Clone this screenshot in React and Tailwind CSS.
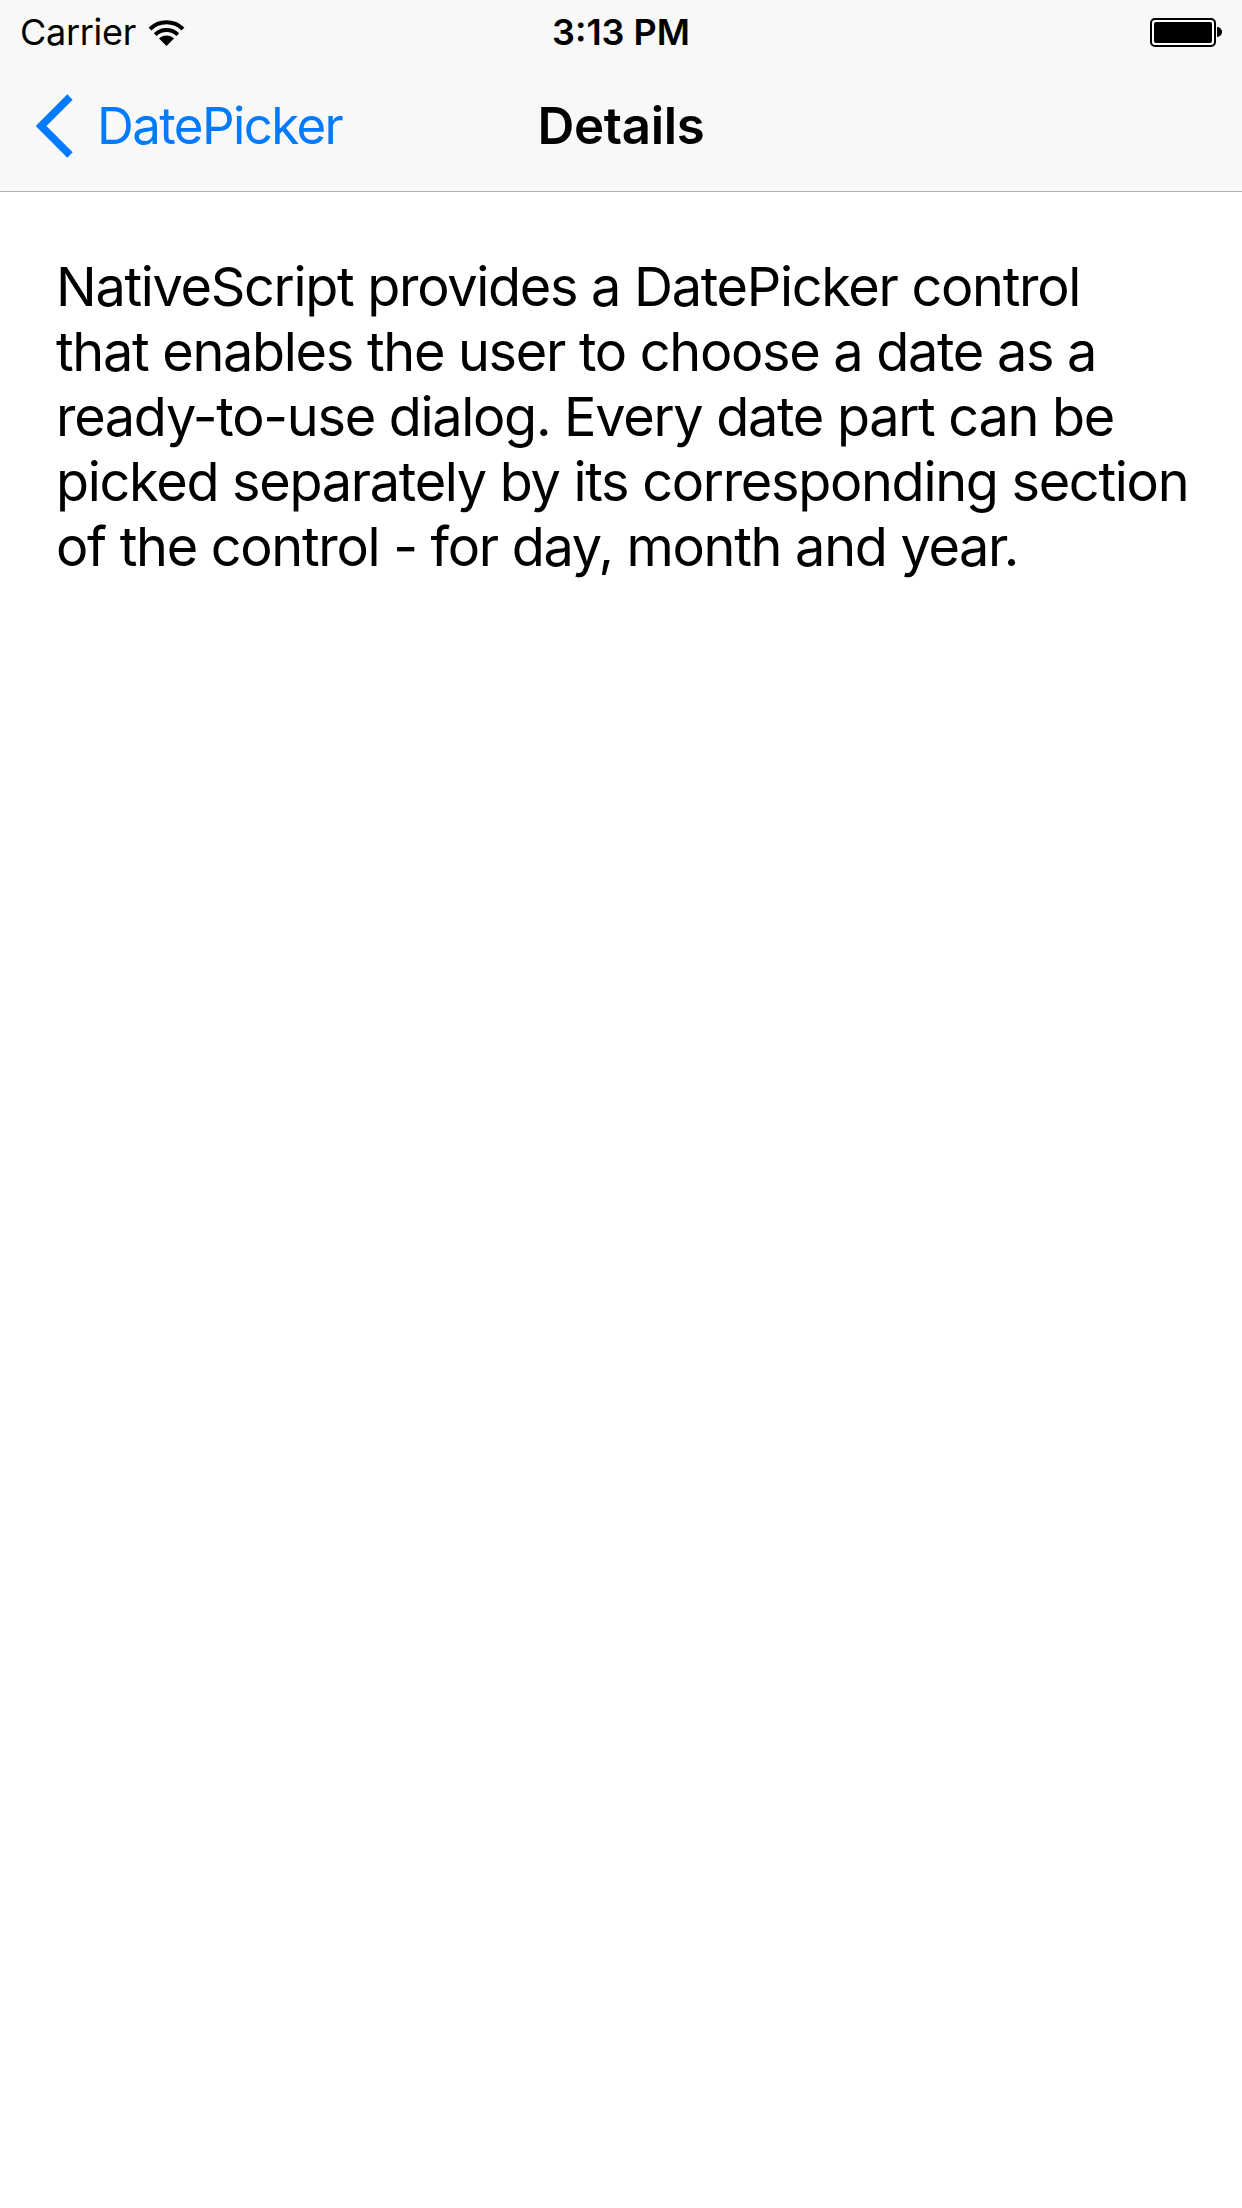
const lines = [
  'NativeScript provides a DatePicker control',
  'that enables the user to choose a date as a',
  'ready-to-use dialog. Every date part can be',
  'picked separately by its corresponding section',
  'of the control - for day, month and year.',
]

function Wifi() {
  return (
    <svg width="37" height="27" viewBox="0 0 37 27">
      <path d="M18.5 27 L11 19.5 A10.6 10.6 0 0 1 26 19.5 Z" fill="#000" />
      <path d="M7.2 15.6 A16 16 0 0 1 29.8 15.6" stroke="#000" strokeWidth="4" fill="none" />
      <path d="M2 10 A23.5 23.5 0 0 1 35 10" stroke="#000" strokeWidth="4" fill="none" />
    </svg>
  )
}

function BackChevron() {
  return (
    <svg width="40" height="64" viewBox="0 0 40 64">
      <path d="M35 3 L6 32 L35 61" stroke="#007aff" strokeWidth="7.5" fill="none" />
    </svg>
  )
}

export default function App() {
  return (
    <div className="w-[1242px] h-[2208px] bg-white" style={{ fontFamily: 'Inter, "Liberation Sans", sans-serif' }}>
      {/* status + nav bar */}
      <div className="bg-[#f8f8f8] border-b border-[#b2b2b2]">
        <div className="relative h-[60px] flex items-center px-[20px] pt-[4px] text-[36px] text-black">
          <div className="flex items-center gap-[12px]">
            <span className="tracking-[-0.3px]">Carrier</span>
            <Wifi />
          </div>
          <span className="absolute left-1/2 -translate-x-1/2 font-semibold">3:13 PM</span>
          <div className="ml-auto flex items-center">
            <div className="w-[66px] h-[29px] rounded-[5px] border-[2px] border-black p-[2px] bg-white">
              <div className="w-full h-full bg-black rounded-[2px]" />
            </div>
            <div className="w-[5px] h-[10px] bg-black rounded-r-full ml-[1px]" />
          </div>
        </div>
        <div className="relative h-[131px] flex items-center">
          <div className="flex items-center text-[#007aff] pl-[35px] gap-[22px]">
            <BackChevron />
            <span className="text-[51px] leading-none tracking-[-1.6px]">DatePicker</span>
          </div>
          <span className="absolute left-1/2 -translate-x-1/2 text-[51px] font-semibold leading-none tracking-[-0.3px]">Details</span>
        </div>
      </div>

      {/* body text */}
      <div className="px-[56px] pt-[62px] text-[54px] leading-[65px] tracking-[-1.3px] text-black">
        {lines.map((l) => (
          <div key={l} className="whitespace-nowrap">{l}</div>
        ))}
      </div>
    </div>
  )
}
